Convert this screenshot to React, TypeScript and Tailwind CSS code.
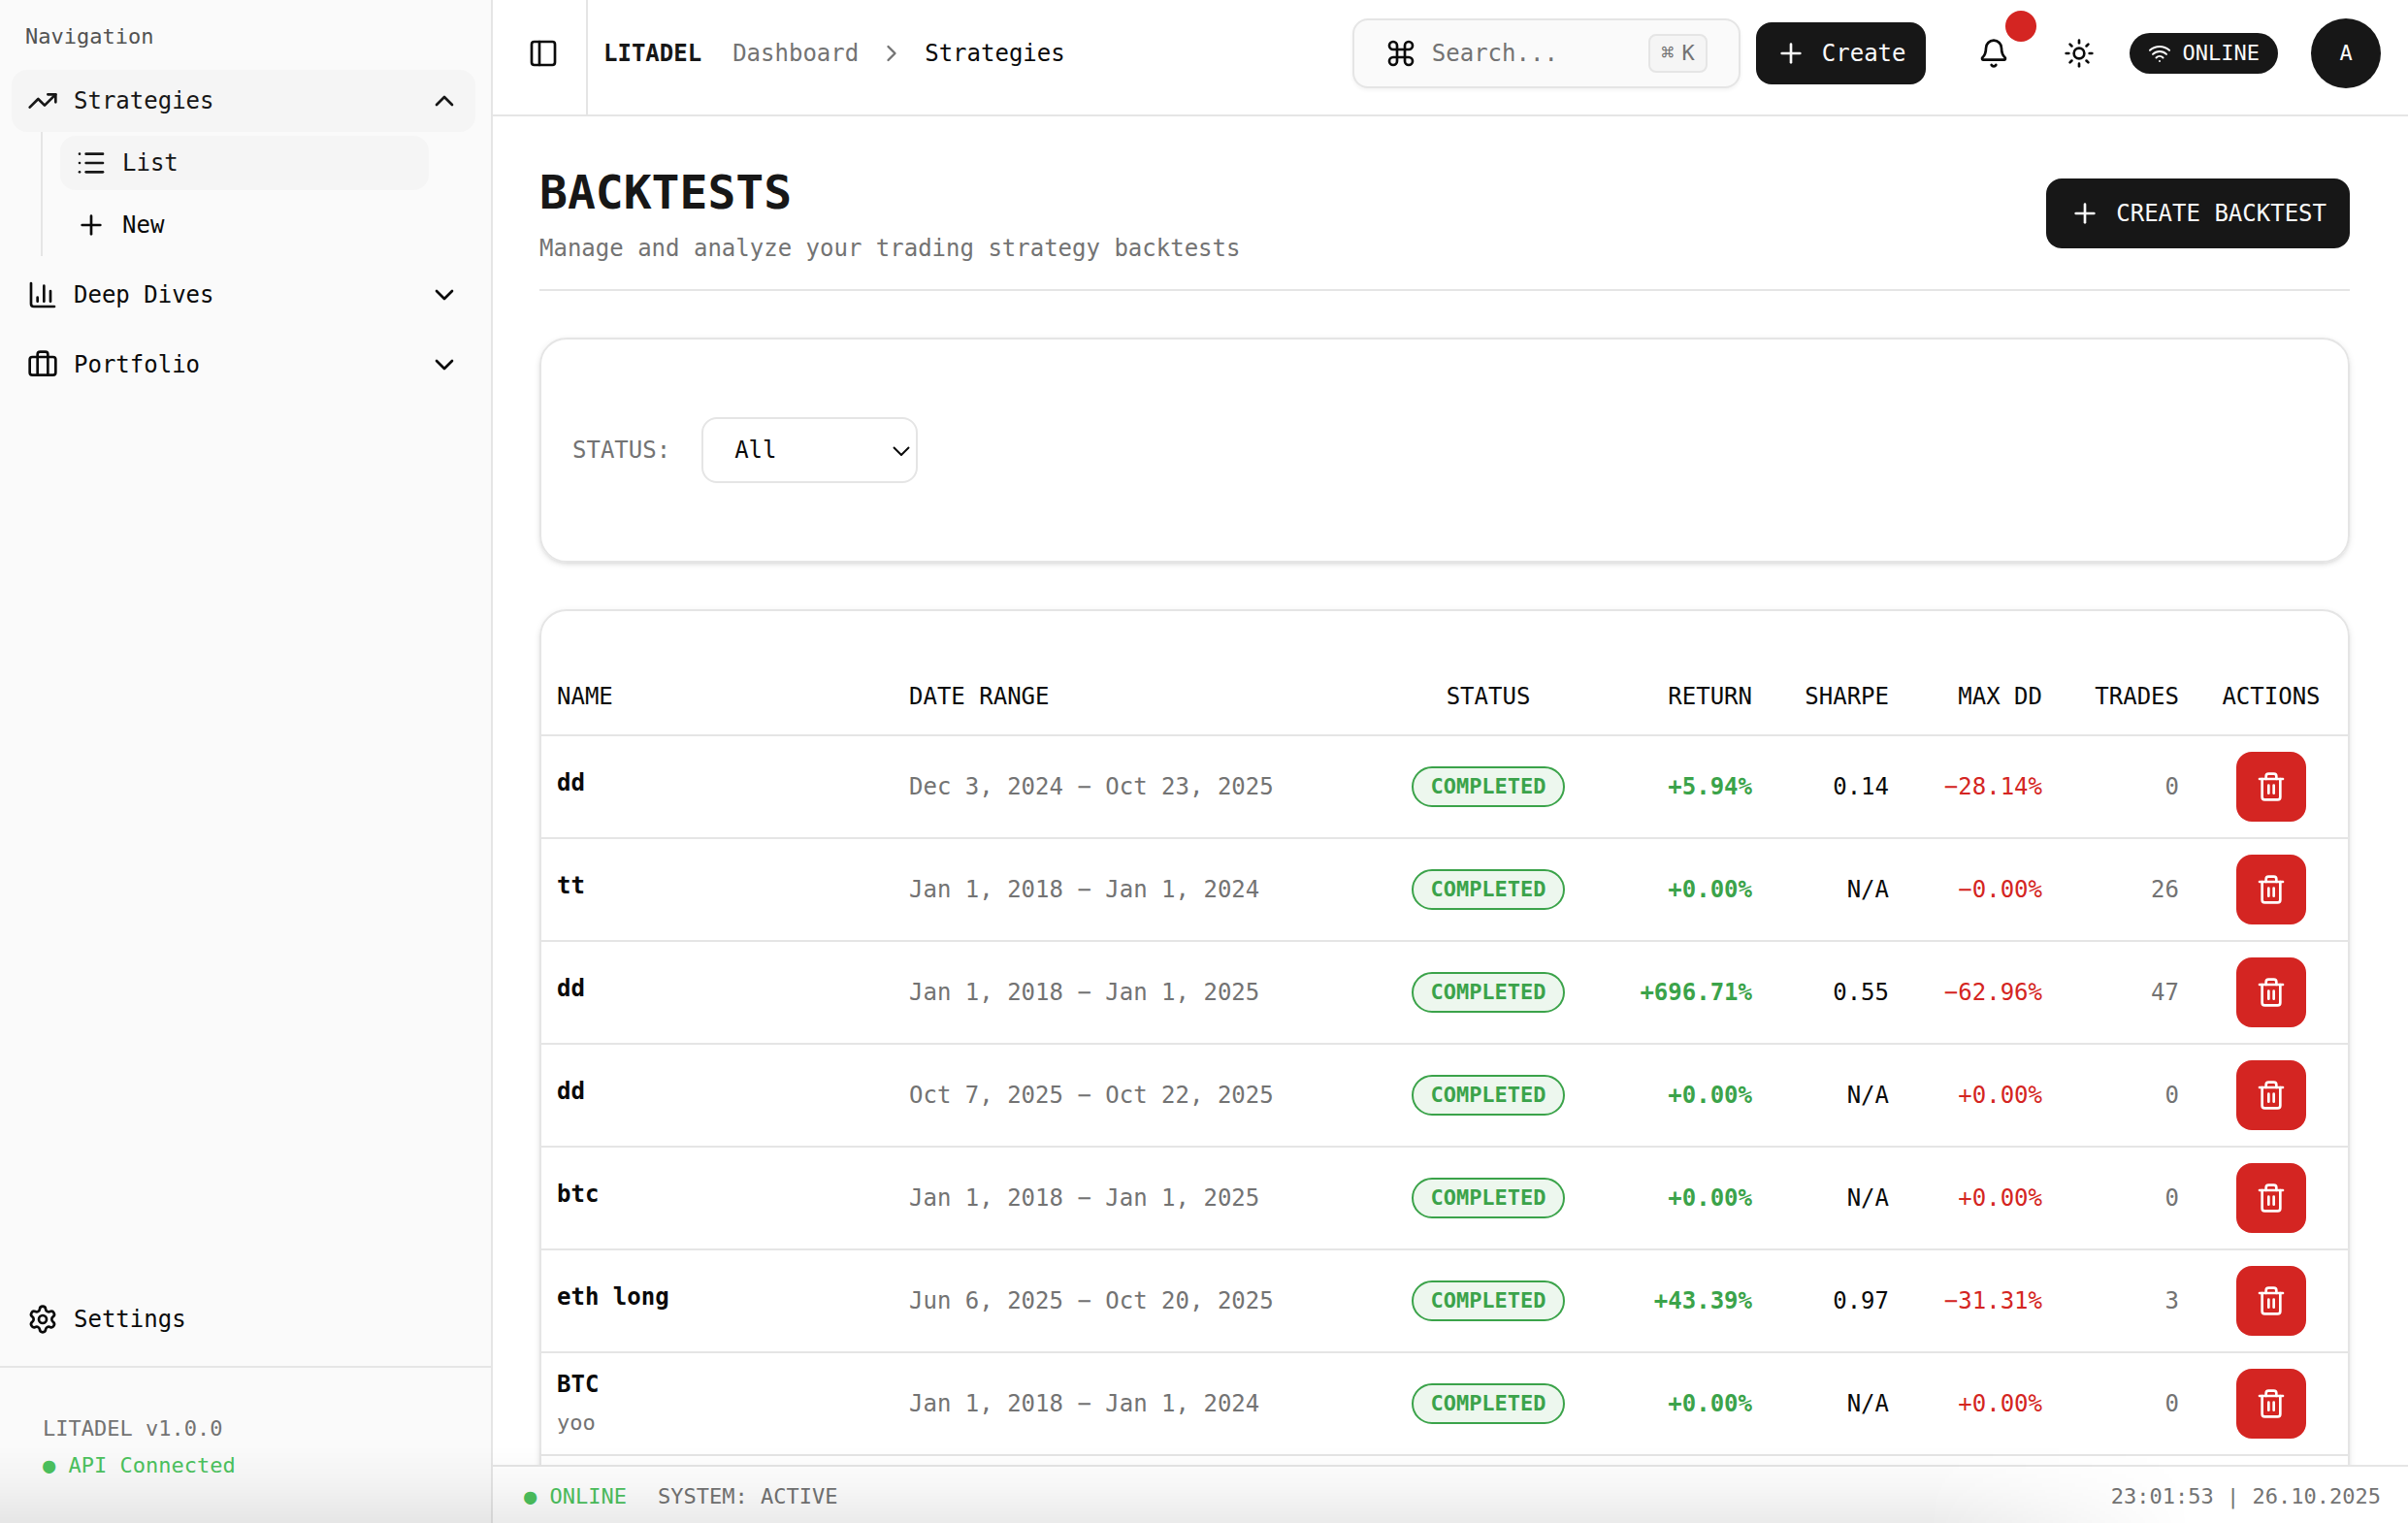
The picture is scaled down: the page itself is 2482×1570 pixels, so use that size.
import React from "react";
import {
  Bell,
  Briefcase,
  ChartColumn,
  ChevronDown,
  ChevronRight,
  ChevronUp,
  Command,
  List,
  PanelLeft,
  Plus,
  Settings,
  Sun,
  Trash2,
  TrendingUp,
  Wifi,
} from "lucide-react";

type Backtest = {
  name: string;
  note?: string;
  range: string;
  ret: string;
  sharpe: string;
  maxDd: string;
  trades: number;
};

const backtests: Backtest[] = [
  { name: "dd", range: "Dec 3, 2024 − Oct 23, 2025", ret: "+5.94%", sharpe: "0.14", maxDd: "−28.14%", trades: 0 },
  { name: "tt", range: "Jan 1, 2018 − Jan 1, 2024", ret: "+0.00%", sharpe: "N/A", maxDd: "−0.00%", trades: 26 },
  { name: "dd", range: "Jan 1, 2018 − Jan 1, 2025", ret: "+696.71%", sharpe: "0.55", maxDd: "−62.96%", trades: 47 },
  { name: "dd", range: "Oct 7, 2025 − Oct 22, 2025", ret: "+0.00%", sharpe: "N/A", maxDd: "+0.00%", trades: 0 },
  { name: "btc", range: "Jan 1, 2018 − Jan 1, 2025", ret: "+0.00%", sharpe: "N/A", maxDd: "+0.00%", trades: 0 },
  { name: "eth long", range: "Jun 6, 2025 − Oct 20, 2025", ret: "+43.39%", sharpe: "0.97", maxDd: "−31.31%", trades: 3 },
  { name: "BTC", note: "yoo", range: "Jan 1, 2018 − Jan 1, 2024", ret: "+0.00%", sharpe: "N/A", maxDd: "+0.00%", trades: 0 },
];

const cardShadow = "shadow-[0_2px_6px_rgba(0,0,0,0.1),0_2px_4px_-2px_rgba(0,0,0,0.1)]";

function Sidebar() {
  return (
    <aside className="flex w-[508px] shrink-0 flex-col border-r-2 border-[#e5e5e5] bg-[#fafafa]">
      <nav aria-label="Main" className="flex flex-1 flex-col gap-2 pt-3 pr-4 pb-4 pl-3">
        <h2 className="flex h-[52px] items-center px-[14px] text-[22px] text-[#525252]">Navigation</h2>
        <div>
          <button
            aria-expanded="true"
            className="flex h-16 w-full items-center gap-4 rounded-2xl bg-[#f5f5f5] px-4 text-[#171717]"
          >
            <TrendingUp size={32} />
            <span>Strategies</span>
            <ChevronUp size={32} className="ml-auto" />
          </button>
          <ul className="mr-12 ml-[30px] flex flex-col gap-2 border-l-2 border-[#e5e5e5] py-1 pl-[18px]">
            <li>
              <a href="#list" className="flex h-14 items-center gap-4 rounded-2xl bg-[#f5f5f5] px-4 text-[#171717]">
                <List size={32} />
                List
              </a>
            </li>
            <li>
              <a href="#new" className="flex h-14 items-center gap-4 rounded-2xl px-4">
                <Plus size={32} />
                New
              </a>
            </li>
          </ul>
        </div>
        <button aria-expanded="false" className="flex h-16 w-full items-center gap-4 rounded-2xl px-4">
          <ChartColumn size={32} />
          <span>Deep Dives</span>
          <ChevronDown size={32} className="ml-auto" />
        </button>
        <button aria-expanded="false" className="flex h-16 w-full items-center gap-4 rounded-2xl px-4">
          <Briefcase size={32} />
          <span>Portfolio</span>
          <ChevronDown size={32} className="ml-auto" />
        </button>
        <a href="#settings" className="mt-auto flex h-16 items-center gap-4 rounded-2xl px-4">
          <Settings size={32} />
          Settings
        </a>
      </nav>
      <div className="border-t-2 border-[#e5e5e5] px-11 pt-11 pb-10 text-[22px] leading-[38px] text-[#737373]">
        <p>LITADEL v1.0.0</p>
        <p className="text-[#4cc25e]">● API Connected</p>
      </div>
    </aside>
  );
}

function Header() {
  return (
    <header className="flex h-[120px] shrink-0 border-b-2 border-[#e5e5e5]">
      <div className="flex w-[98px] items-start justify-center border-r-2 border-[#e5e5e5] pt-[19px] pl-2">
        <button aria-label="Toggle sidebar" className="flex size-[72px] items-center justify-center">
          <PanelLeft size={32} />
        </button>
      </div>
      <div className="flex flex-1 items-center pr-7 pb-2 pl-4">
        <span className="font-bold text-[#171717]">LITADEL</span>
        <nav aria-label="Breadcrumb" className="ml-8 flex items-center gap-5">
          <a href="#dashboard" className="text-[#737373]">
            Dashboard
          </a>
          <ChevronRight size={28} className="text-[#737373]" />
          <span aria-current="page">Strategies</span>
        </nav>
        <button className="ml-auto flex h-[72px] w-[400px] items-center gap-4 rounded-2xl border-2 border-[#e5e5e5] bg-[#fafafa] px-8 shadow-[0_2px_4px_rgba(0,0,0,0.05)]">
          <Command size={32} />
          <span className="text-[#737373]">Search...</span>
          <kbd className="ml-auto flex h-10 items-center gap-2 rounded-lg border-2 border-[#e5e5e5] bg-[#f5f5f5] px-[11px] font-['DejaVu_Sans_Mono',monospace] text-[22px] text-[#737373]">
            <span>⌘</span>
            <span>K</span>
          </kbd>
        </button>
        <button className="ml-4 flex h-16 items-center gap-4 rounded-2xl bg-[#171717] px-5 text-[#fafafa]">
          <Plus size={32} />
          Create
        </button>
        <div className="ml-[34px] flex items-center gap-4">
          <button aria-label="Notifications" className="relative flex size-[72px] items-center justify-center">
            <Bell size={32} />
            <span className="absolute -top-2 -right-2 size-8 rounded-full bg-[#d42522]" />
          </button>
          <button aria-label="Toggle theme" className="flex size-[72px] items-center justify-center">
            <Sun size={32} />
          </button>
          <span className="flex h-[42px] items-center gap-3 rounded-full bg-[#171717] px-[19px] text-[22px] text-[#fafafa]">
            <Wifi size={24} />
            ONLINE
          </span>
        </div>
        <button
          aria-label="Account"
          className="ml-[34px] flex size-[72px] items-center justify-center rounded-full bg-[#171717] text-[22px] text-[#fafafa]"
        >
          A
        </button>
      </div>
    </header>
  );
}

function BacktestRow({ row }: { row: Backtest }) {
  return (
    <tr className="h-[106px] border-b-2 border-[#e5e5e5]">
      <td className="px-4">
        <p className="mb-2 leading-8 font-bold">{row.name}</p>
        {row.note && <p className="text-[22px] leading-8 text-[#737373]">{row.note}</p>}
      </td>
      <td className="px-4 text-[#737373]">{row.range}</td>
      <td>
        <div className="flex justify-center">
          <span className="flex h-[42px] items-center rounded-full border-2 border-[#3ba34a] bg-[#edf7ee] px-[17px] text-[22px] font-bold text-[#3ba34a]">
            COMPLETED
          </span>
        </div>
      </td>
      <td className="px-4 text-right font-bold text-[#3ba34a]">{row.ret}</td>
      <td className="px-4 text-right">{row.sharpe}</td>
      <td className="px-4 text-right text-[#d42522]">{row.maxDd}</td>
      <td className="px-4 text-right text-[#737373]">{row.trades}</td>
      <td>
        <button
          aria-label={`Delete ${row.name}`}
          className="mx-auto flex size-[72px] items-center justify-center rounded-2xl bg-[#d42522] text-white"
        >
          <Trash2 size={32} />
        </button>
      </td>
    </tr>
  );
}

export default function App() {
  return (
    <div className="relative flex h-screen overflow-hidden bg-white font-['DejaVu_Sans_Mono',monospace] text-[24px] leading-9 text-[#0a0a0a]">
      <Sidebar />
      <div className="flex min-w-0 flex-1 flex-col">
        <Header />
        <main className="flex min-h-0 flex-1 flex-col gap-12 overflow-hidden pt-[46px] pr-[60px] pl-12">
          <div className="flex shrink-0 items-center justify-between border-b-2 border-[#e5e5e5] pb-6">
            <div>
              <h1 className="text-[48px] leading-[64px] font-bold text-[#171717]">BACKTESTS</h1>
              <p className="mt-2 leading-9 text-[#737373]">Manage and analyze your trading strategy backtests</p>
            </div>
            <button className="flex h-[72px] items-center gap-4 rounded-2xl bg-[#171717] px-6 text-[#fafafa]">
              <Plus size={32} />
              CREATE BACKTEST
            </button>
          </div>

          <section
            aria-label="Filters"
            className={`flex shrink-0 items-center gap-8 rounded-[28px] border-2 border-[#e5e5e5] px-8 py-20 ${cardShadow}`}
          >
            <label htmlFor="status" className="text-[#737373]">
              STATUS:
            </label>
            <div className="relative">
              <select
                id="status"
                className="h-[68px] w-[223px] appearance-none rounded-2xl border-2 border-[#e5e5e5] bg-white px-8"
              >
                <option>All</option>
                <option>Completed</option>
              </select>
              <svg
                aria-hidden="true"
                viewBox="0 0 18 10"
                className="pointer-events-none absolute top-[30px] right-2 h-[10px] w-[18px] fill-none stroke-[#0a0a0a] stroke-2"
              >
                <path d="M1 1l8 8 8-8" />
              </svg>
            </div>
          </section>

          <section
            aria-label="Backtests"
            className={`shrink-0 rounded-[28px] border-2 border-[#e5e5e5] py-12 ${cardShadow}`}
          >
            <table className="w-full table-fixed border-collapse">
              <colgroup>
                <col className="w-[363px]" />
                <col />
                <col className="w-[190px]" />
                <col className="w-[193px]" />
                <col className="w-[141px]" />
                <col className="w-[158px]" />
                <col className="w-[141px]" />
                <col className="w-[158px]" />
              </colgroup>
              <thead>
                <tr className="h-20 border-b-2 border-[#e5e5e5] whitespace-nowrap">
                  <th className="px-4 text-left font-normal">NAME</th>
                  <th className="px-4 text-left font-normal">DATE RANGE</th>
                  <th className="text-center font-normal">STATUS</th>
                  <th className="px-4 text-right font-normal">RETURN</th>
                  <th className="px-4 text-right font-normal">SHARPE</th>
                  <th className="px-4 text-right font-normal">MAX DD</th>
                  <th className="px-4 text-right font-normal">TRADES</th>
                  <th className="text-center font-normal">ACTIONS</th>
                </tr>
              </thead>
              <tbody>
                {backtests.map((row, i) => (
                  <BacktestRow key={i} row={row} />
                ))}
              </tbody>
            </table>
          </section>
        </main>
        <footer className="flex h-[60px] shrink-0 items-center justify-between border-t-2 border-[#e5e5e5] bg-white pt-1 pr-7 pl-8 text-[22px] text-[#737373]">
          <div className="flex gap-8">
            <span className="text-[#4cc25e]">● ONLINE</span>
            <span>SYSTEM: ACTIVE</span>
          </div>
          <span>23:01:53 | 26.10.2025</span>
        </footer>
      </div>
      <div className="pointer-events-none absolute bottom-0 left-0 h-20 w-full bg-linear-to-t from-black/8 via-black/3 to-transparent mask-r-from-80% mask-r-to-91%" />
    </div>
  );
}
